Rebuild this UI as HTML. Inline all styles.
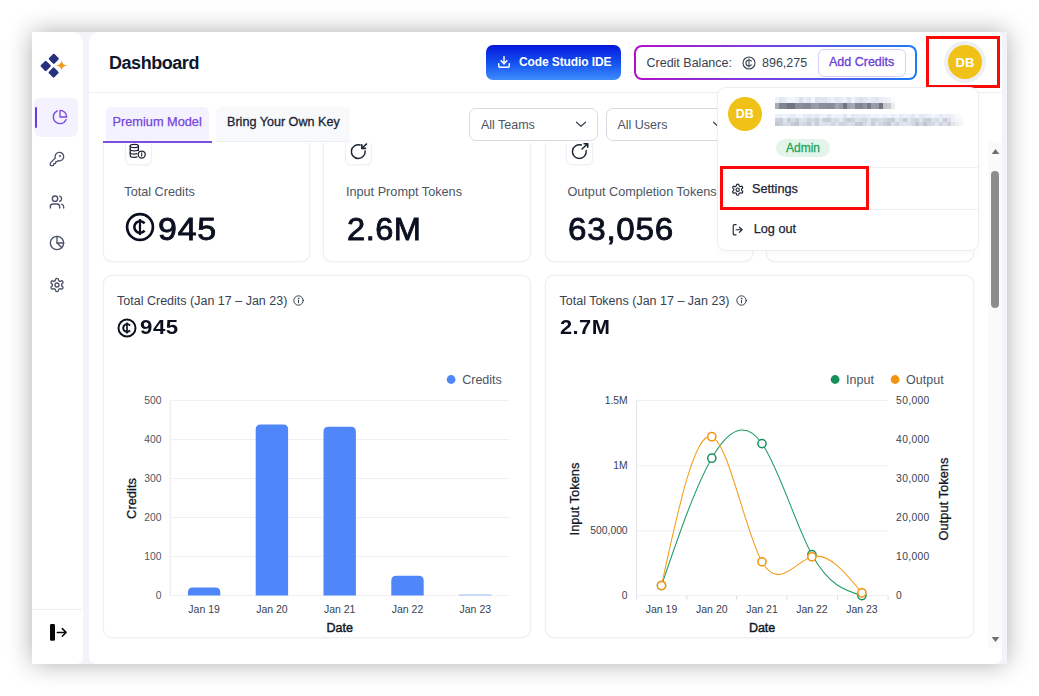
<!DOCTYPE html>
<html lang="en">
<head>
<meta charset="utf-8">
<title>Dashboard</title>
<style>
*{box-sizing:border-box;margin:0;padding:0}
html,body{width:1039px;height:696px;overflow:hidden;background:#fff}
body{font-family:"Liberation Sans",Arial,sans-serif;color:#111827;position:relative}
.abs{position:absolute}
#win{position:absolute;left:32px;top:32px;width:975px;height:632px;background:#f3f4f9;
  box-shadow:0 0 23px 0 rgba(0,0,0,.32);overflow:hidden}
/* coordinates inside #win are page coords minus 32 */
#side{position:absolute;left:0;top:0;width:50.8px;height:632px;background:#fff;border-radius:0 11px 7px 0}
#main{position:absolute;left:57px;top:0;width:913px;height:632px;background:#fff;border-radius:10px 6px 7px 7px;overflow:hidden}
#hdr{position:absolute;left:0;top:0;width:913px;height:61px;border-bottom:1px solid #eef0f4;background:#fff}
.t{position:absolute;white-space:nowrap;line-height:1}
.ic{fill:none;stroke:currentColor;stroke-width:2;stroke-linecap:round;stroke-linejoin:round;color:#4a5168}
.card{position:absolute;background:#fff;border:1px solid #eff0f5;border-radius:9px;box-shadow:0 0 0 .4px #f1f2f6}
.ibox{position:absolute;left:20px;top:19px;width:27px;height:27px;border:1px solid #eef0f4;border-radius:6px;background:#fff;box-shadow:0 1px 2px rgba(16,24,40,.04)}
.lbl{position:absolute;left:19.5px;top:66.5px;font-size:12.7px;color:#4b5563;white-space:nowrap;line-height:1}
.val{position:absolute;left:22px;top:95.2px;font-size:31px;font-weight:400;color:#0b1020;white-space:nowrap;line-height:1;letter-spacing:2.4px;-webkit-text-stroke:.85px #0b1020;transform-origin:0 50%}
.sel{position:absolute;height:32.8px;border:1px solid #d6dae3;border-radius:7px;background:#fff}
.blur{left:0;top:0;filter:blur(.7px)}
.blur i{position:absolute;display:block}
</style>
</head>
<body>
<div id="win">
  <!-- SIDEBAR -->
  <div id="side">
    <!-- logo -->
    <svg class="abs" style="left:5px;top:20px" width="34" height="28" viewBox="0 0 34 28">
      <g fill="#27307f">
        <rect x="-3.9" y="-3.9" width="7.8" height="7.8" rx="1.1" transform="translate(16.8,6.8) rotate(45)"/>
        <rect x="-3.9" y="-3.9" width="7.8" height="7.8" rx="1.1" transform="translate(8.7,13.9) rotate(45)"/>
        <rect x="-3.9" y="-3.9" width="7.8" height="7.8" rx="1.1" transform="translate(16.6,20.5) rotate(45)"/>
      </g>
      <path fill="#f59a1f" d="M24.6 8.5 C25.2 11.5 26.6 12.9 30.4 13.5 C26.6 14.1 25.2 15.5 24.6 18.5 C24 15.5 22.6 14.1 18.8 13.5 C22.6 12.9 24 11.5 24.6 8.5Z"/>
    </svg>
    <!-- active nav -->
    <div class="abs" style="left:2px;top:66px;width:44px;height:39px;background:#f5f2ff;border-radius:6px"></div>
    <div class="abs" style="left:2.5px;top:75px;width:2.5px;height:21px;background:#6a3dd6;border-radius:2px"></div>
    <svg class="abs ic" style="left:20px;top:77px;color:#7a4be0" width="16" height="16" viewBox="0 0 24 24"><path d="M21.21 15.89A10 10 0 1 1 8 2.83"/><path d="M22 12A10 10 0 0 0 12 2v10z"/></svg>
    <svg class="abs ic" style="left:17px;top:119px" width="16" height="16" viewBox="0 0 24 24"><path d="M2.586 17.414A2 2 0 0 0 2 18.828V21a1 1 0 0 0 1 1h3a1 1 0 0 0 1-1v-1a1 1 0 0 1 1-1h1a1 1 0 0 0 1-1v-1a1 1 0 0 1 1-1h.172a2 2 0 0 0 1.414-.586l.814-.814a6.5 6.5 0 1 0-4-4z"/><circle cx="16.5" cy="7.5" r=".6" fill="currentColor"/></svg>
    <svg class="abs ic" style="left:16.8px;top:161.5px" width="16" height="16" viewBox="0 0 24 24"><path d="M16 21v-2a4 4 0 0 0-4-4H6a4 4 0 0 0-4 4v2"/><circle cx="9" cy="7" r="4"/><path d="M22 21v-2a4 4 0 0 0-3-3.87"/><path d="M16 3.13a4 4 0 0 1 0 7.75"/></svg>
    <svg class="abs ic" style="left:17px;top:203px" width="16" height="16" viewBox="0 0 24 24"><circle cx="12" cy="12" r="10"/><path d="M12 2v10l7.2 6.8"/><path d="M12 12h10"/></svg>
    <svg class="abs ic" style="left:17px;top:245px" width="16" height="16" viewBox="0 0 24 24"><path d="M12.22 2h-.44a2 2 0 0 0-2 2v.18a2 2 0 0 1-1 1.73l-.43.25a2 2 0 0 1-2 0l-.15-.08a2 2 0 0 0-2.73.73l-.22.38a2 2 0 0 0 .73 2.73l.15.1a2 2 0 0 1 1 1.72v.51a2 2 0 0 1-1 1.74l-.15.09a2 2 0 0 0-.73 2.73l.22.38a2 2 0 0 0 2.73.73l.15-.08a2 2 0 0 1 2 0l.43.25a2 2 0 0 1 1 1.73V20a2 2 0 0 0 2 2h.44a2 2 0 0 0 2-2v-.18a2 2 0 0 1 1-1.73l.43-.25a2 2 0 0 1 2 0l.15.08a2 2 0 0 0 2.73-.73l.22-.39a2 2 0 0 0-.73-2.73l-.15-.08a2 2 0 0 1-1-1.74v-.5a2 2 0 0 1 1-1.74l.15-.09a2 2 0 0 0 .73-2.73l-.22-.38a2 2 0 0 0-2.73-.73l-.15.08a2 2 0 0 1-2 0l-.43-.25a2 2 0 0 1-1-1.73V4a2 2 0 0 0-2-2z"/><circle cx="12" cy="12" r="3"/></svg>
    <!-- bottom -->
    <div class="abs" style="left:0;top:577px;width:50px;height:1px;background:#eceef3"></div>
    <svg class="abs" style="left:16.7px;top:591.3px" width="20" height="19" viewBox="0 0 20 19"><rect x="1" y="1" width="5" height="16.8" rx="1.3" fill="#0a0a0a"/><path d="M8.3 9.4h8.6M13.3 5.6L17.1 9.4 13.3 13.2" fill="none" stroke="#0a0a0a" stroke-width="1.5" stroke-linecap="round" stroke-linejoin="round"/></svg>
  </div>
  <!-- MAIN -->
  <div id="main">
    <!-- stat cards (scrolled under the tab bar) -->
    <div class="card" style="left:13.8px;top:86px;width:207.4px;height:144px"><div class="abs" style="left:1px;top:0">
      <div class="ibox"><svg class="abs" style="left:-1px;top:-1px" width="27" height="27" viewBox="0 0 27 27" fill="none" stroke="#1b2333" stroke-width="1.25" stroke-linecap="round" stroke-linejoin="round"><ellipse cx="9.3" cy="7.9" rx="4.1" ry="1.6"/><path d="M5.2 7.9v9.8c0 .9 1.8 1.6 4.1 1.6 1 0 1.9-.1 2.6-.4M13.4 7.9v4.6"/><path d="M5.2 11.2c0 .9 1.8 1.6 4.1 1.6s4.1-.7 4.1-1.6M5.2 14.5c0 .9 1.8 1.6 4.1 1.6 1 0 1.9-.15 2.6-.4"/><circle cx="16.7" cy="16.5" r="3.5" fill="#fff"/><path d="M16.7 14.9v3.2" stroke-width="1.1"/></svg></div>
      <div class="lbl">Total Credits</div>
      <svg class="abs" style="left:20.5px;top:93px" width="30" height="30" viewBox="0 0 30 30" fill="none" stroke="#0b1020" stroke-linecap="round"><circle cx="15" cy="15" r="12.9" stroke-width="2.7"/><path d="M19.6 11.3A5.8 5.8 0 1 0 19.6 18.7" stroke-width="2.6" stroke-linecap="butt"/><path d="M15 6.9v16.2" stroke-width="2.2" stroke-linecap="butt"/></svg>
      <div class="val" style="left:52.8px;letter-spacing:.7px;transform:scaleX(1.095)">945</div>
    </div></div>
    <div class="card" style="left:233.9px;top:86px;width:208.5px;height:144px"><div class="abs" style="left:.5px;top:0">
      <div class="ibox" style="left:20.5px"><svg class="abs" style="left:-1px;top:-1px" width="27" height="27" viewBox="0 0 27 27" fill="none" stroke="#1b2333" stroke-width="1.45" stroke-linecap="round" stroke-linejoin="round"><path d="M15.1 6.950A6.9 6.9 0 1 0 20.150 13"/><path d="M21.6 5.9L16.9 10.3"/><path d="M16.8 6.7v3.7h3.7" stroke-width="1.6"/></svg></div>
      <div class="lbl" style="left:21.5px">Input Prompt Tokens</div>
      <div class="val" style="left:22.3px;letter-spacing:.5px;transform:scaleX(1.05)">2.6M</div>
    </div></div>
    <div class="card" style="left:456.3px;top:86px;width:207.7px;height:144px"><div class="abs" style="left:-.4px;top:0">
      <div class="ibox" style="left:20.5px"><svg class="abs" style="left:-1px;top:-1px" width="27" height="27" viewBox="0 0 27 27" fill="none" stroke="#1b2333" stroke-width="1.45" stroke-linecap="round" stroke-linejoin="round"><path d="M15.3 7A6.9 6.9 0 1 0 20.150 12.6"/><path d="M16 11L21.5 5.9"/><path d="M18.1 5.7h3.6v3.6" stroke-width="1.6"/></svg></div>
      <div class="lbl" style="left:21.5px">Output Completion Tokens</div>
      <div class="val" style="left:21.8px;letter-spacing:.7px;transform:scaleX(1.07)">63,056</div>
    </div></div>
    <div class="card" style="left:676.9px;top:86px;width:208.5px;height:144px"></div>

    <!-- chart cards -->
    <div class="card" style="left:13.8px;top:242.9px;width:428.6px;height:363px"><div class="abs" style="left:1px;top:.9px">
      <svg class="abs" style="left:0;top:0" width="426" height="359" viewBox="0 0 426 359" font-family="Liberation Sans, Arial, sans-serif">
      <line x1="65.2" x2="404.7" y1="123.6" y2="123.6" stroke="#efeff1" stroke-width="1"/>
      <line x1="65.2" x2="404.7" y1="162.5" y2="162.5" stroke="#efeff1" stroke-width="1"/>
      <line x1="65.2" x2="404.7" y1="201.5" y2="201.5" stroke="#efeff1" stroke-width="1"/>
      <line x1="65.2" x2="404.7" y1="240.4" y2="240.4" stroke="#efeff1" stroke-width="1"/>
      <line x1="65.2" x2="404.7" y1="279.4" y2="279.4" stroke="#efeff1" stroke-width="1"/>
      <line x1="65.2" x2="404.7" y1="318.4" y2="318.4" stroke="#efeff1" stroke-width="1"/>
      <line x1="65.2" x2="65.2" y1="123.6" y2="318.4" stroke="#e6e6e9" stroke-width="1"/>
      <text x="56.4" y="126.8" text-anchor="end" font-size="10.3" fill="#4b5563">500</text>
      <text x="56.4" y="165.7" text-anchor="end" font-size="10.3" fill="#4b5563">400</text>
      <text x="56.4" y="204.7" text-anchor="end" font-size="10.3" fill="#4b5563">300</text>
      <text x="56.4" y="243.6" text-anchor="end" font-size="10.3" fill="#4b5563">200</text>
      <text x="56.4" y="282.6" text-anchor="end" font-size="10.3" fill="#4b5563">100</text>
      <text x="56.4" y="321.6" text-anchor="end" font-size="10.3" fill="#4b5563">0</text>
      <path fill="#4f87fa" d="M82.9 318.4V315.5Q82.9 310.6 87.8 310.6H110.4Q115.3 310.6 115.3 315.5V318.4Z"/>
      <path fill="#4f87fa" d="M150.7 318.4V152.4Q150.7 147.4 155.7 147.4H178.1Q183.1 147.4 183.1 152.4V318.4Z"/>
      <path fill="#4f87fa" d="M218.5 318.4V154.8Q218.5 149.8 223.5 149.8H245.9Q250.9 149.8 250.9 154.8V318.4Z"/>
      <path fill="#4f87fa" d="M286.3 318.4V303.8Q286.3 298.8 291.3 298.8H313.7Q318.7 298.8 318.7 303.8V318.4Z"/>
      <rect x="354.1" y="317.4" width="32.4" height="1.2" fill="#a9c5fc"/>
      <text x="99.1" y="336.0" text-anchor="middle" font-size="10.5" fill="#374151">Jan 19</text>
      <text x="166.9" y="336.0" text-anchor="middle" font-size="10.5" fill="#374151">Jan 20</text>
      <text x="234.7" y="336.0" text-anchor="middle" font-size="10.5" fill="#374151">Jan 21</text>
      <text x="302.5" y="336.0" text-anchor="middle" font-size="10.5" fill="#374151">Jan 22</text>
      <text x="370.3" y="336.0" text-anchor="middle" font-size="10.5" fill="#374151">Jan 23</text>
      <text x="234.7" y="354.5" text-anchor="middle" font-size="12.5" fill="#111827" stroke="#111827" stroke-width=".45">Date</text>
      <text transform="translate(30.5,221.5) rotate(-90)" text-anchor="middle" font-size="12.9" fill="#111827" stroke="#111827" stroke-width=".3">Credits</text>
      <circle cx="346.1" cy="102.5" r="4.4" fill="#4f87fa"/>
      <text x="357.2" y="106.8" font-size="12.5" fill="#4b5563">Credits</text>
      </svg>
      <div class="t" style="left:12.3px;top:18.6px;font-size:12.5px;color:#374151">Total Credits (Jan 17 – Jan 23)</div>
      <svg class="abs" style="left:188.5px;top:18.3px" width="11" height="11" viewBox="0 0 11 11" fill="none" stroke="#374151" stroke-width="1" stroke-linecap="round"><circle cx="5.5" cy="5.5" r="4.7"/><path d="M5.5 5.2v2.6"/><circle cx="5.5" cy="3.4" r=".35" fill="#374151"/></svg>
      <svg class="abs" style="left:12.6px;top:41.1px" width="20" height="20" viewBox="0 0 30 30" fill="none" stroke="#0b1020" stroke-linecap="round"><circle cx="15" cy="15" r="12.8" stroke-width="2.9"/><path d="M19.6 11.3A5.8 5.8 0 1 0 19.6 18.7" stroke-width="2.9" stroke-linecap="butt"/><path d="M15 6.7v16.6" stroke-width="2.5" stroke-linecap="butt"/></svg>
      <div class="t" style="left:35.5px;top:41.5px;font-size:19.5px;font-weight:700;color:#0b1020;letter-spacing:.5px;transform:scaleX(1.14);transform-origin:0 50%">945</div>
    </div></div>
    <div class="card" style="left:456.3px;top:242.9px;width:429.1px;height:363px"><div class="abs" style="left:-.4px;top:.9px">
      <svg class="abs" style="left:0;top:0" width="427" height="359" viewBox="0 0 427 359" font-family="Liberation Sans, Arial, sans-serif">
      <line x1="90.5" x2="342.1" y1="123.6" y2="123.6" stroke="#efeff1" stroke-width="1"/>
      <line x1="90.5" x2="342.1" y1="188.8" y2="188.8" stroke="#efeff1" stroke-width="1"/>
      <line x1="90.5" x2="342.1" y1="253.8" y2="253.8" stroke="#efeff1" stroke-width="1"/>
      <line x1="90.5" x2="342.1" y1="318.6" y2="318.6" stroke="#efeff1" stroke-width="1"/>
      <line x1="90.5" x2="90.5" y1="123.6" y2="322.6" stroke="#e4e4e8" stroke-width="1"/>
      <line x1="140.8" x2="140.8" y1="318.6" y2="322.6" stroke="#d5d9e0" stroke-width="1"/>
      <line x1="190.7" x2="190.7" y1="318.6" y2="322.6" stroke="#d5d9e0" stroke-width="1"/>
      <line x1="241.0" x2="241.0" y1="318.6" y2="322.6" stroke="#d5d9e0" stroke-width="1"/>
      <line x1="291.5" x2="291.5" y1="318.6" y2="322.6" stroke="#d5d9e0" stroke-width="1"/>
      <line x1="342.1" x2="342.1" y1="318.6" y2="322.6" stroke="#d5d9e0" stroke-width="1"/>
      <text x="81.6" y="126.8" text-anchor="end" font-size="10.3" fill="#374151">1.5M</text>
      <text x="81.6" y="192.0" text-anchor="end" font-size="10.3" fill="#374151">1M</text>
      <text x="81.6" y="257.0" text-anchor="end" font-size="10.3" fill="#374151">500,000</text>
      <text x="81.6" y="321.8" text-anchor="end" font-size="10.3" fill="#374151">0</text>
      <text x="350.1" y="126.8" font-size="10.3" fill="#374151" letter-spacing=".35">50,000</text>
      <text x="350.1" y="165.7" font-size="10.3" fill="#374151" letter-spacing=".35">40,000</text>
      <text x="350.1" y="204.7" font-size="10.3" fill="#374151" letter-spacing=".35">30,000</text>
      <text x="350.1" y="243.6" font-size="10.3" fill="#374151" letter-spacing=".35">20,000</text>
      <text x="350.1" y="282.6" font-size="10.3" fill="#374151" letter-spacing=".35">10,000</text>
      <text x="350.1" y="321.8" font-size="10.3" fill="#374151" letter-spacing=".35">0</text>
      <path d="M115.5 308.5C132.3 259.4 149.0 210.4 165.8 181.2C182.5 152.1 199.3 142.7 216.0 166.6C232.6 190.3 249.3 246.8 265.9 277.6C282.6 308.5 299.2 313.5 315.9 318.6" fill="none" stroke="#1f9d64" stroke-width="1.05"/>
      <path d="M115.5 308.5C132.3 231.0 149.0 153.6 165.8 159.7C182.5 165.8 199.3 255.2 216.0 284.8C232.6 314.2 249.3 284.5 265.9 279.8C282.6 275.1 299.2 295.4 315.9 315.8" fill="none" stroke="#f59b1c" stroke-width="1.05"/>
      <circle cx="115.5" cy="308.5" r="4.1" fill="#fff" stroke="#14925a" stroke-width="1.5"/>
      <circle cx="165.8" cy="181.2" r="4.1" fill="#fff" stroke="#14925a" stroke-width="1.5"/>
      <circle cx="216.0" cy="166.6" r="4.1" fill="#fff" stroke="#14925a" stroke-width="1.5"/>
      <circle cx="265.9" cy="277.6" r="4.1" fill="#fff" stroke="#14925a" stroke-width="1.5"/>
      <circle cx="315.9" cy="318.6" r="4.1" fill="#fff" stroke="#14925a" stroke-width="1.5"/>
      <circle cx="115.5" cy="308.5" r="4.1" fill="#fff" stroke="#f3920f" stroke-width="1.5"/>
      <circle cx="165.8" cy="159.7" r="4.1" fill="#fff" stroke="#f3920f" stroke-width="1.5"/>
      <circle cx="216.0" cy="284.8" r="4.1" fill="#fff" stroke="#f3920f" stroke-width="1.5"/>
      <circle cx="265.9" cy="279.8" r="4.1" fill="#fff" stroke="#f3920f" stroke-width="1.5"/>
      <circle cx="315.9" cy="315.8" r="4.1" fill="#fff" stroke="#f3920f" stroke-width="1.5"/>
      <text x="115.5" y="336.0" text-anchor="middle" font-size="10.5" fill="#374151">Jan 19</text>
      <text x="165.8" y="336.0" text-anchor="middle" font-size="10.5" fill="#374151">Jan 20</text>
      <text x="216.0" y="336.0" text-anchor="middle" font-size="10.5" fill="#374151">Jan 21</text>
      <text x="265.9" y="336.0" text-anchor="middle" font-size="10.5" fill="#374151">Jan 22</text>
      <text x="315.9" y="336.0" text-anchor="middle" font-size="10.5" fill="#374151">Jan 23</text>
      <text x="216.1" y="354.5" text-anchor="middle" font-size="12.5" fill="#111827" stroke="#111827" stroke-width=".45">Date</text>
      <text transform="translate(32.9,222.0) rotate(-90)" text-anchor="middle" font-size="12.9" fill="#111827" stroke="#111827" stroke-width=".3">Input Tokens</text>
      <text transform="translate(402.4,222.0) rotate(-90)" text-anchor="middle" font-size="12.9" fill="#111827" stroke="#111827" stroke-width=".3">Output Tokens</text>
      <circle cx="289.1" cy="102.5" r="4.4" fill="#14925a"/>
      <text x="300.1" y="106.8" font-size="12.5" fill="#4b5563">Input</text>
      <circle cx="349.1" cy="102.5" r="4.4" fill="#f3920f"/>
      <text x="360.1" y="106.8" font-size="12.5" fill="#4b5563">Output</text>
      </svg>
      <div class="t" style="left:13.6px;top:18.6px;font-size:12.5px;color:#374151">Total Tokens (Jan 17 – Jan 23)</div>
      <svg class="abs" style="left:190.5px;top:18.3px" width="11" height="11" viewBox="0 0 11 11" fill="none" stroke="#374151" stroke-width="1" stroke-linecap="round"><circle cx="5.5" cy="5.5" r="4.7"/><path d="M5.5 5.2v2.6"/><circle cx="5.5" cy="3.4" r=".35" fill="#374151"/></svg>
      <div class="t" style="left:14px;top:41.5px;font-size:19.5px;font-weight:700;color:#0b1020;letter-spacing:.4px;transform:scaleX(1.12);transform-origin:0 50%">2.7M</div>
    </div></div>

    <!-- sticky tab / filter bar -->
    <div class="abs" style="left:0;top:62px;width:899px;height:48.5px;background:#fff"></div>
    <div class="abs" style="left:16.5px;top:75px;width:103.5px;height:33.5px;background:#f5f2ff;border-radius:5px 5px 0 0"></div>
    <div class="abs" style="left:14px;top:108.7px;width:109px;height:2px;background:#7a4fe0"></div>
    <div class="t" style="left:23.5px;top:84px;font-size:12.75px;color:#7345dc;-webkit-text-stroke:.25px #7345dc">Premium Model</div>
    <div class="abs" style="left:127.4px;top:75px;width:134px;height:34.5px;background:#f8f9fb;border-radius:5px 5px 0 0;border-bottom:1.5px solid #eceef2"></div>
    <div class="t" style="left:138px;top:84px;font-size:12.6px;color:#1b2333;-webkit-text-stroke:.3px #1b2333">Bring Your Own Key</div>
    <div class="sel" style="left:380.2px;top:76px;width:128.4px">
      <div class="t" style="left:10.7px;top:9.8px;font-size:12.5px;color:#4b5563">All Teams</div>
      <svg class="abs" style="left:105px;top:9.4px" width="12" height="12" viewBox="0 0 12 12" fill="none" stroke="#374151" stroke-width="1.15" stroke-linecap="round" stroke-linejoin="round"><path d="M1.5 4.2L6 8.3l4.5-4.1"/></svg>
    </div>
    <div class="sel" style="left:516.9px;top:76px;width:128.4px">
      <div class="t" style="left:10.5px;top:9.8px;font-size:12.5px;color:#4b5563">All Users</div>
      <svg class="abs" style="left:105px;top:9.4px" width="12" height="12" viewBox="0 0 12 12" fill="none" stroke="#374151" stroke-width="1.15" stroke-linecap="round" stroke-linejoin="round"><path d="M1.5 4.2L6 8.3l4.5-4.1"/></svg>
    </div>
    <div id="hdr">
      <div class="t" style="left:20px;top:22px;font-size:18px;font-weight:700;letter-spacing:-.45px;color:#0f172a">Dashboard</div>
      <!-- Code Studio IDE -->
      <div class="abs" style="left:397.3px;top:13.3px;width:134.4px;height:34.4px;border-radius:7px;background:linear-gradient(180deg,#0616dc 0%,#1450ef 50%,#3d8dfd 100%)">
        <svg class="abs" style="left:10.7px;top:9.7px;color:#fff" width="14" height="14" viewBox="0 0 24 24" fill="none" stroke="currentColor" stroke-width="2.6" stroke-linecap="round" stroke-linejoin="round"><path d="M21 15v4a2 2 0 0 1-2 2H5a2 2 0 0 1-2-2v-4"/><path d="M7 10l5 5 5-5"/><path d="M12 15V3"/></svg>
        <div class="t" style="left:32.7px;top:10.7px;font-size:12px;font-weight:700;letter-spacing:-.1px;color:#fff">Code Studio IDE</div>
      </div>
      <!-- Credit balance -->
      <div class="abs" style="left:545px;top:13px;width:283px;height:35px;border-radius:8px;background:linear-gradient(90deg,#b012c8 0%,#7a3fe0 45%,#1b7df5 100%)">
        <div class="abs" style="left:2px;top:2px;right:2px;bottom:2px;background:#fff;border-radius:6px"></div>
        <div class="t" style="left:12.5px;top:11.5px;font-size:12.5px;color:#374151">Credit Balance:</div>
        <svg class="abs" style="left:108px;top:10.5px" width="14" height="14" viewBox="0 0 14 14" fill="none" stroke="#374151" stroke-width="1.1" stroke-linecap="round"><circle cx="7" cy="7" r="6"/><path d="M9.3 5.1A3 3 0 1 0 9.3 8.9" stroke-width="1.2"/><path d="M7 2.9v8.2" stroke-width="1"/></svg>
        <div class="t" style="left:128px;top:11.5px;font-size:12.5px;color:#374151">896,275</div>
        <div class="abs" style="left:184px;top:4px;width:88px;height:27.5px;border:1px solid #d9cdf6;border-radius:6px;background:#fff"></div>
        <div class="t" style="left:195px;top:11px;font-size:12.5px;font-weight:400;color:#6a3dd6;-webkit-text-stroke:.3px #6a3dd6">Add Credits</div>
      </div>
      <!-- avatar -->
      <div class="abs" style="left:855px;top:9px;width:42px;height:42px;border-radius:50%;background:#eef0f3"></div>
      <div class="abs" style="left:859px;top:13px;width:34px;height:34px;border-radius:50%;background:#f0c117"></div>
      <div class="t" style="left:859px;top:23.5px;width:34px;text-align:center;font-size:13px;font-weight:700;color:#fff">DB</div>
      <div class="abs" style="left:837px;top:4.2px;width:73.5px;height:51.6px;border:3px solid #fb0808"></div>
    </div>
    <!-- scrollbar -->
    <div class="abs" style="left:899px;top:110px;width:14px;height:506px;background:#fafafa"></div>
    <svg class="abs" style="left:902px;top:115.5px" width="9" height="7" viewBox="0 0 9 7"><path d="M4.5.9L8.3 6H.7z" fill="#6f6f6f"/></svg>
    <div class="abs" style="left:902.2px;top:138.6px;width:8.3px;height:137.7px;border-radius:4.2px;background:#8c8c8c"></div>
    <svg class="abs" style="left:902px;top:603.5px" width="9" height="7" viewBox="0 0 9 7"><path d="M4.5 6.1L8.3 1H.7z" fill="#6f6f6f"/></svg>

    <!-- user dropdown -->
    <div class="abs" id="dd" style="left:627.8px;top:54.8px;width:262.6px;height:164.4px;background:#fff;border:1px solid #eceef2;border-radius:9px;box-shadow:0 2px 5px rgba(16,24,40,.03)"></div>
    <div class="abs" style="left:638.6px;top:64.8px;width:34.4px;height:34.4px;border-radius:50%;background:#f0c117"></div>
    <div class="t" style="left:638.6px;top:75.8px;width:34.4px;text-align:center;font-size:12.5px;font-weight:700;color:#fff">DB</div>
    <div class="abs blur"><i style="left:685.5px;top:65.2px;width:4.3px;height:5.9px;background:rgba(239,243,253,1.0)"></i><i style="left:689.5px;top:65.2px;width:4.3px;height:5.9px;background:rgba(228,232,242,1.0)"></i><i style="left:693.5px;top:65.2px;width:4.3px;height:5.9px;background:rgba(231,235,245,1.0)"></i><i style="left:697.5px;top:65.2px;width:4.3px;height:5.9px;background:rgba(242,246,256,1.0)"></i><i style="left:701.5px;top:65.2px;width:4.3px;height:5.9px;background:rgba(240,244,254,1.0)"></i><i style="left:705.5px;top:65.2px;width:4.3px;height:5.9px;background:rgba(236,240,250,1.0)"></i><i style="left:709.5px;top:65.2px;width:4.3px;height:5.9px;background:rgba(220,224,234,1.0)"></i><i style="left:713.5px;top:65.2px;width:4.3px;height:5.9px;background:rgba(234,238,248,1.0)"></i><i style="left:717.5px;top:65.2px;width:4.3px;height:5.9px;background:rgba(227,231,241,1.0)"></i><i style="left:721.5px;top:65.2px;width:4.3px;height:5.9px;background:rgba(240,244,254,1.0)"></i><i style="left:725.5px;top:65.2px;width:4.3px;height:5.9px;background:rgba(221,225,235,1.0)"></i><i style="left:729.5px;top:65.2px;width:4.3px;height:5.9px;background:rgba(225,229,239,1.0)"></i><i style="left:733.5px;top:65.2px;width:4.3px;height:5.9px;background:rgba(223,227,237,1.0)"></i><i style="left:737.5px;top:65.2px;width:4.3px;height:5.9px;background:rgba(231,235,245,1.0)"></i><i style="left:741.5px;top:65.2px;width:4.3px;height:5.9px;background:rgba(235,239,249,1.0)"></i><i style="left:745.5px;top:65.2px;width:4.3px;height:5.9px;background:rgba(227,231,241,1.0)"></i><i style="left:749.5px;top:65.2px;width:4.3px;height:5.9px;background:rgba(232,236,246,1.0)"></i><i style="left:753.5px;top:65.2px;width:4.3px;height:5.9px;background:rgba(237,241,251,1.0)"></i><i style="left:757.5px;top:65.2px;width:4.3px;height:5.9px;background:rgba(223,227,237,1.0)"></i><i style="left:761.5px;top:65.2px;width:4.3px;height:5.9px;background:rgba(238,242,252,1.0)"></i><i style="left:765.5px;top:65.2px;width:4.3px;height:5.9px;background:rgba(227,231,241,1.0)"></i><i style="left:769.5px;top:65.2px;width:4.3px;height:5.9px;background:rgba(220,224,234,1.0)"></i><i style="left:773.5px;top:65.2px;width:4.3px;height:5.9px;background:rgba(226,230,240,1.0)"></i><i style="left:777.5px;top:65.2px;width:4.3px;height:5.9px;background:rgba(233,237,247,1.0)"></i><i style="left:781.5px;top:65.2px;width:4.3px;height:5.9px;background:rgba(228,232,242,1.0)"></i><i style="left:785.5px;top:65.2px;width:4.3px;height:5.9px;background:rgba(225,229,239,1.0)"></i><i style="left:789.5px;top:65.2px;width:4.3px;height:5.9px;background:rgba(232,236,246,1.0)"></i><i style="left:793.5px;top:65.2px;width:4.3px;height:5.9px;background:rgba(225,229,239,0.6)"></i><i style="left:797.5px;top:65.2px;width:4.3px;height:5.9px;background:rgba(222,226,236,0.4)"></i><i style="left:801.5px;top:65.2px;width:4.3px;height:5.9px;background:rgba(224,228,238,0.2)"></i><i style="left:685.5px;top:70.8px;width:4.3px;height:6.7px;background:rgba(168,172,182,1.0)"></i><i style="left:689.5px;top:70.8px;width:4.3px;height:6.7px;background:rgba(128,132,142,1.0)"></i><i style="left:693.5px;top:70.8px;width:4.3px;height:6.7px;background:rgba(128,132,142,1.0)"></i><i style="left:697.5px;top:70.8px;width:4.3px;height:6.7px;background:rgba(112,116,126,1.0)"></i><i style="left:701.5px;top:70.8px;width:4.3px;height:6.7px;background:rgba(112,116,126,1.0)"></i><i style="left:705.5px;top:70.8px;width:4.3px;height:6.7px;background:rgba(138,142,152,1.0)"></i><i style="left:709.5px;top:70.8px;width:4.3px;height:6.7px;background:rgba(139,143,153,1.0)"></i><i style="left:713.5px;top:70.8px;width:4.3px;height:6.7px;background:rgba(133,137,147,1.0)"></i><i style="left:717.5px;top:70.8px;width:4.3px;height:6.7px;background:rgba(133,137,147,1.0)"></i><i style="left:721.5px;top:70.8px;width:4.3px;height:6.7px;background:rgba(149,153,163,1.0)"></i><i style="left:725.5px;top:70.8px;width:4.3px;height:6.7px;background:rgba(152,156,166,1.0)"></i><i style="left:729.5px;top:70.8px;width:4.3px;height:6.7px;background:rgba(137,141,151,1.0)"></i><i style="left:733.5px;top:70.8px;width:4.3px;height:6.7px;background:rgba(138,142,152,1.0)"></i><i style="left:737.5px;top:70.8px;width:4.3px;height:6.7px;background:rgba(135,139,149,1.0)"></i><i style="left:741.5px;top:70.8px;width:4.3px;height:6.7px;background:rgba(137,141,151,1.0)"></i><i style="left:745.5px;top:70.8px;width:4.3px;height:6.7px;background:rgba(161,165,175,1.0)"></i><i style="left:749.5px;top:70.8px;width:4.3px;height:6.7px;background:rgba(150,154,164,1.0)"></i><i style="left:753.5px;top:70.8px;width:4.3px;height:6.7px;background:rgba(114,118,128,1.0)"></i><i style="left:757.5px;top:70.8px;width:4.3px;height:6.7px;background:rgba(158,162,172,1.0)"></i><i style="left:761.5px;top:70.8px;width:4.3px;height:6.7px;background:rgba(165,169,179,1.0)"></i><i style="left:765.5px;top:70.8px;width:4.3px;height:6.7px;background:rgba(133,137,147,1.0)"></i><i style="left:769.5px;top:70.8px;width:4.3px;height:6.7px;background:rgba(130,134,144,1.0)"></i><i style="left:773.5px;top:70.8px;width:4.3px;height:6.7px;background:rgba(145,149,159,1.0)"></i><i style="left:777.5px;top:70.8px;width:4.3px;height:6.7px;background:rgba(120,124,134,1.0)"></i><i style="left:781.5px;top:70.8px;width:4.3px;height:6.7px;background:rgba(154,158,168,1.0)"></i><i style="left:785.5px;top:70.8px;width:4.3px;height:6.7px;background:rgba(150,154,164,1.0)"></i><i style="left:789.5px;top:70.8px;width:4.3px;height:6.7px;background:rgba(112,116,126,1.0)"></i><i style="left:793.5px;top:70.8px;width:4.3px;height:6.7px;background:rgba(155,159,169,0.6)"></i><i style="left:797.5px;top:70.8px;width:4.3px;height:6.7px;background:rgba(120,124,134,0.4)"></i><i style="left:801.5px;top:70.8px;width:4.3px;height:6.7px;background:rgba(151,155,165,0.2)"></i><i style="left:685.5px;top:81.5px;width:4.3px;height:4.5px;background:rgba(237,241,251,1.0)"></i><i style="left:689.5px;top:81.5px;width:4.3px;height:4.5px;background:rgba(235,239,249,1.0)"></i><i style="left:693.5px;top:81.5px;width:4.3px;height:4.5px;background:rgba(241,245,255,1.0)"></i><i style="left:697.5px;top:81.5px;width:4.3px;height:4.5px;background:rgba(236,240,250,1.0)"></i><i style="left:701.5px;top:81.5px;width:4.3px;height:4.5px;background:rgba(231,235,245,1.0)"></i><i style="left:705.5px;top:81.5px;width:4.3px;height:4.5px;background:rgba(241,245,255,1.0)"></i><i style="left:709.5px;top:81.5px;width:4.3px;height:4.5px;background:rgba(241,245,255,1.0)"></i><i style="left:713.5px;top:81.5px;width:4.3px;height:4.5px;background:rgba(231,235,245,1.0)"></i><i style="left:717.5px;top:81.5px;width:4.3px;height:4.5px;background:rgba(227,231,241,1.0)"></i><i style="left:721.5px;top:81.5px;width:4.3px;height:4.5px;background:rgba(234,238,248,1.0)"></i><i style="left:725.5px;top:81.5px;width:4.3px;height:4.5px;background:rgba(226,230,240,1.0)"></i><i style="left:729.5px;top:81.5px;width:4.3px;height:4.5px;background:rgba(237,241,251,1.0)"></i><i style="left:733.5px;top:81.5px;width:4.3px;height:4.5px;background:rgba(238,242,252,1.0)"></i><i style="left:737.5px;top:81.5px;width:4.3px;height:4.5px;background:rgba(226,230,240,1.0)"></i><i style="left:741.5px;top:81.5px;width:4.3px;height:4.5px;background:rgba(239,243,253,1.0)"></i><i style="left:745.5px;top:81.5px;width:4.3px;height:4.5px;background:rgba(237,241,251,1.0)"></i><i style="left:749.5px;top:81.5px;width:4.3px;height:4.5px;background:rgba(238,242,252,1.0)"></i><i style="left:753.5px;top:81.5px;width:4.3px;height:4.5px;background:rgba(226,230,240,1.0)"></i><i style="left:757.5px;top:81.5px;width:4.3px;height:4.5px;background:rgba(240,244,254,1.0)"></i><i style="left:761.5px;top:81.5px;width:4.3px;height:4.5px;background:rgba(227,231,241,1.0)"></i><i style="left:765.5px;top:81.5px;width:4.3px;height:4.5px;background:rgba(231,235,245,1.0)"></i><i style="left:769.5px;top:81.5px;width:4.3px;height:4.5px;background:rgba(232,236,246,1.0)"></i><i style="left:773.5px;top:81.5px;width:4.3px;height:4.5px;background:rgba(229,233,243,1.0)"></i><i style="left:777.5px;top:81.5px;width:4.3px;height:4.5px;background:rgba(233,237,247,1.0)"></i><i style="left:781.5px;top:81.5px;width:4.3px;height:4.5px;background:rgba(240,244,254,1.0)"></i><i style="left:785.5px;top:81.5px;width:4.3px;height:4.5px;background:rgba(237,241,251,1.0)"></i><i style="left:789.5px;top:81.5px;width:4.3px;height:4.5px;background:rgba(242,246,256,1.0)"></i><i style="left:793.5px;top:81.5px;width:4.3px;height:4.5px;background:rgba(237,241,251,1.0)"></i><i style="left:797.5px;top:81.5px;width:4.3px;height:4.5px;background:rgba(242,246,256,1.0)"></i><i style="left:801.5px;top:81.5px;width:4.3px;height:4.5px;background:rgba(234,238,248,1.0)"></i><i style="left:805.5px;top:81.5px;width:4.3px;height:4.5px;background:rgba(240,244,254,1.0)"></i><i style="left:809.5px;top:81.5px;width:4.3px;height:4.5px;background:rgba(229,233,243,1.0)"></i><i style="left:813.5px;top:81.5px;width:4.3px;height:4.5px;background:rgba(237,241,251,1.0)"></i><i style="left:817.5px;top:81.5px;width:4.3px;height:4.5px;background:rgba(235,239,249,1.0)"></i><i style="left:821.5px;top:81.5px;width:4.3px;height:4.5px;background:rgba(227,231,241,1.0)"></i><i style="left:825.5px;top:81.5px;width:4.3px;height:4.5px;background:rgba(239,243,253,1.0)"></i><i style="left:829.5px;top:81.5px;width:4.3px;height:4.5px;background:rgba(228,232,242,1.0)"></i><i style="left:833.5px;top:81.5px;width:4.3px;height:4.5px;background:rgba(232,236,246,1.0)"></i><i style="left:837.5px;top:81.5px;width:4.3px;height:4.5px;background:rgba(236,240,250,1.0)"></i><i style="left:841.5px;top:81.5px;width:4.3px;height:4.5px;background:rgba(242,246,256,1.0)"></i><i style="left:845.5px;top:81.5px;width:4.3px;height:4.5px;background:rgba(237,241,251,1.0)"></i><i style="left:849.5px;top:81.5px;width:4.3px;height:4.5px;background:rgba(230,234,244,1.0)"></i><i style="left:853.5px;top:81.5px;width:4.3px;height:4.5px;background:rgba(236,240,250,1.0)"></i><i style="left:857.5px;top:81.5px;width:4.3px;height:4.5px;background:rgba(234,238,248,1.0)"></i><i style="left:861.5px;top:81.5px;width:4.3px;height:4.5px;background:rgba(228,232,242,0.6)"></i><i style="left:865.5px;top:81.5px;width:4.3px;height:4.5px;background:rgba(235,239,249,0.4)"></i><i style="left:869.5px;top:81.5px;width:4.3px;height:4.5px;background:rgba(236,240,250,0.2)"></i><i style="left:685.5px;top:85.7px;width:4.3px;height:4.5px;background:rgba(207,211,221,1.0)"></i><i style="left:689.5px;top:85.7px;width:4.3px;height:4.5px;background:rgba(203,207,217,1.0)"></i><i style="left:693.5px;top:85.7px;width:4.3px;height:4.5px;background:rgba(223,227,237,1.0)"></i><i style="left:697.5px;top:85.7px;width:4.3px;height:4.5px;background:rgba(200,204,214,1.0)"></i><i style="left:701.5px;top:85.7px;width:4.3px;height:4.5px;background:rgba(218,222,232,1.0)"></i><i style="left:705.5px;top:85.7px;width:4.3px;height:4.5px;background:rgba(202,206,216,1.0)"></i><i style="left:709.5px;top:85.7px;width:4.3px;height:4.5px;background:rgba(221,225,235,1.0)"></i><i style="left:713.5px;top:85.7px;width:4.3px;height:4.5px;background:rgba(220,224,234,1.0)"></i><i style="left:717.5px;top:85.7px;width:4.3px;height:4.5px;background:rgba(207,211,221,1.0)"></i><i style="left:721.5px;top:85.7px;width:4.3px;height:4.5px;background:rgba(213,217,227,1.0)"></i><i style="left:725.5px;top:85.7px;width:4.3px;height:4.5px;background:rgba(203,207,217,1.0)"></i><i style="left:729.5px;top:85.7px;width:4.3px;height:4.5px;background:rgba(221,225,235,1.0)"></i><i style="left:733.5px;top:85.7px;width:4.3px;height:4.5px;background:rgba(199,203,213,1.0)"></i><i style="left:737.5px;top:85.7px;width:4.3px;height:4.5px;background:rgba(200,204,214,1.0)"></i><i style="left:741.5px;top:85.7px;width:4.3px;height:4.5px;background:rgba(217,221,231,1.0)"></i><i style="left:745.5px;top:85.7px;width:4.3px;height:4.5px;background:rgba(215,219,229,1.0)"></i><i style="left:749.5px;top:85.7px;width:4.3px;height:4.5px;background:rgba(227,231,241,1.0)"></i><i style="left:753.5px;top:85.7px;width:4.3px;height:4.5px;background:rgba(210,214,224,1.0)"></i><i style="left:757.5px;top:85.7px;width:4.3px;height:4.5px;background:rgba(199,203,213,1.0)"></i><i style="left:761.5px;top:85.7px;width:4.3px;height:4.5px;background:rgba(205,209,219,1.0)"></i><i style="left:765.5px;top:85.7px;width:4.3px;height:4.5px;background:rgba(221,225,235,1.0)"></i><i style="left:769.5px;top:85.7px;width:4.3px;height:4.5px;background:rgba(217,221,231,1.0)"></i><i style="left:773.5px;top:85.7px;width:4.3px;height:4.5px;background:rgba(209,213,223,1.0)"></i><i style="left:777.5px;top:85.7px;width:4.3px;height:4.5px;background:rgba(224,228,238,1.0)"></i><i style="left:781.5px;top:85.7px;width:4.3px;height:4.5px;background:rgba(206,210,220,1.0)"></i><i style="left:785.5px;top:85.7px;width:4.3px;height:4.5px;background:rgba(212,216,226,1.0)"></i><i style="left:789.5px;top:85.7px;width:4.3px;height:4.5px;background:rgba(218,222,232,1.0)"></i><i style="left:793.5px;top:85.7px;width:4.3px;height:4.5px;background:rgba(211,215,225,1.0)"></i><i style="left:797.5px;top:85.7px;width:4.3px;height:4.5px;background:rgba(202,206,216,1.0)"></i><i style="left:801.5px;top:85.7px;width:4.3px;height:4.5px;background:rgba(199,203,213,1.0)"></i><i style="left:805.5px;top:85.7px;width:4.3px;height:4.5px;background:rgba(227,231,241,1.0)"></i><i style="left:809.5px;top:85.7px;width:4.3px;height:4.5px;background:rgba(218,222,232,1.0)"></i><i style="left:813.5px;top:85.7px;width:4.3px;height:4.5px;background:rgba(199,203,213,1.0)"></i><i style="left:817.5px;top:85.7px;width:4.3px;height:4.5px;background:rgba(223,227,237,1.0)"></i><i style="left:821.5px;top:85.7px;width:4.3px;height:4.5px;background:rgba(213,217,227,1.0)"></i><i style="left:825.5px;top:85.7px;width:4.3px;height:4.5px;background:rgba(208,212,222,1.0)"></i><i style="left:829.5px;top:85.7px;width:4.3px;height:4.5px;background:rgba(224,228,238,1.0)"></i><i style="left:833.5px;top:85.7px;width:4.3px;height:4.5px;background:rgba(204,208,218,1.0)"></i><i style="left:837.5px;top:85.7px;width:4.3px;height:4.5px;background:rgba(202,206,216,1.0)"></i><i style="left:841.5px;top:85.7px;width:4.3px;height:4.5px;background:rgba(221,225,235,1.0)"></i><i style="left:845.5px;top:85.7px;width:4.3px;height:4.5px;background:rgba(216,220,230,1.0)"></i><i style="left:849.5px;top:85.7px;width:4.3px;height:4.5px;background:rgba(228,232,242,1.0)"></i><i style="left:853.5px;top:85.7px;width:4.3px;height:4.5px;background:rgba(202,206,216,1.0)"></i><i style="left:857.5px;top:85.7px;width:4.3px;height:4.5px;background:rgba(218,222,232,1.0)"></i><i style="left:861.5px;top:85.7px;width:4.3px;height:4.5px;background:rgba(226,230,240,0.6)"></i><i style="left:865.5px;top:85.7px;width:4.3px;height:4.5px;background:rgba(223,227,237,0.4)"></i><i style="left:869.5px;top:85.7px;width:4.3px;height:4.5px;background:rgba(211,215,225,0.2)"></i><i style="left:685.5px;top:89.9px;width:4.3px;height:4.5px;background:rgba(196,200,210,1.0)"></i><i style="left:689.5px;top:89.9px;width:4.3px;height:4.5px;background:rgba(200,204,214,1.0)"></i><i style="left:693.5px;top:89.9px;width:4.3px;height:4.5px;background:rgba(217,221,231,1.0)"></i><i style="left:697.5px;top:89.9px;width:4.3px;height:4.5px;background:rgba(213,217,227,1.0)"></i><i style="left:701.5px;top:89.9px;width:4.3px;height:4.5px;background:rgba(199,203,213,1.0)"></i><i style="left:705.5px;top:89.9px;width:4.3px;height:4.5px;background:rgba(193,197,207,1.0)"></i><i style="left:709.5px;top:89.9px;width:4.3px;height:4.5px;background:rgba(216,220,230,1.0)"></i><i style="left:713.5px;top:89.9px;width:4.3px;height:4.5px;background:rgba(208,212,222,1.0)"></i><i style="left:717.5px;top:89.9px;width:4.3px;height:4.5px;background:rgba(199,203,213,1.0)"></i><i style="left:721.5px;top:89.9px;width:4.3px;height:4.5px;background:rgba(219,223,233,1.0)"></i><i style="left:725.5px;top:89.9px;width:4.3px;height:4.5px;background:rgba(200,204,214,1.0)"></i><i style="left:729.5px;top:89.9px;width:4.3px;height:4.5px;background:rgba(223,227,237,1.0)"></i><i style="left:733.5px;top:89.9px;width:4.3px;height:4.5px;background:rgba(219,223,233,1.0)"></i><i style="left:737.5px;top:89.9px;width:4.3px;height:4.5px;background:rgba(221,225,235,1.0)"></i><i style="left:741.5px;top:89.9px;width:4.3px;height:4.5px;background:rgba(210,214,224,1.0)"></i><i style="left:745.5px;top:89.9px;width:4.3px;height:4.5px;background:rgba(220,224,234,1.0)"></i><i style="left:749.5px;top:89.9px;width:4.3px;height:4.5px;background:rgba(207,211,221,1.0)"></i><i style="left:753.5px;top:89.9px;width:4.3px;height:4.5px;background:rgba(208,212,222,1.0)"></i><i style="left:757.5px;top:89.9px;width:4.3px;height:4.5px;background:rgba(220,224,234,1.0)"></i><i style="left:761.5px;top:89.9px;width:4.3px;height:4.5px;background:rgba(215,219,229,1.0)"></i><i style="left:765.5px;top:89.9px;width:4.3px;height:4.5px;background:rgba(199,203,213,1.0)"></i><i style="left:769.5px;top:89.9px;width:4.3px;height:4.5px;background:rgba(197,201,211,1.0)"></i><i style="left:773.5px;top:89.9px;width:4.3px;height:4.5px;background:rgba(214,218,228,1.0)"></i><i style="left:777.5px;top:89.9px;width:4.3px;height:4.5px;background:rgba(224,228,238,1.0)"></i><i style="left:781.5px;top:89.9px;width:4.3px;height:4.5px;background:rgba(201,205,215,1.0)"></i><i style="left:785.5px;top:89.9px;width:4.3px;height:4.5px;background:rgba(221,225,235,1.0)"></i><i style="left:789.5px;top:89.9px;width:4.3px;height:4.5px;background:rgba(211,215,225,1.0)"></i><i style="left:793.5px;top:89.9px;width:4.3px;height:4.5px;background:rgba(201,205,215,1.0)"></i><i style="left:797.5px;top:89.9px;width:4.3px;height:4.5px;background:rgba(195,199,209,1.0)"></i><i style="left:801.5px;top:89.9px;width:4.3px;height:4.5px;background:rgba(221,225,235,1.0)"></i><i style="left:805.5px;top:89.9px;width:4.3px;height:4.5px;background:rgba(207,211,221,1.0)"></i><i style="left:809.5px;top:89.9px;width:4.3px;height:4.5px;background:rgba(222,226,236,1.0)"></i><i style="left:813.5px;top:89.9px;width:4.3px;height:4.5px;background:rgba(225,229,239,1.0)"></i><i style="left:817.5px;top:89.9px;width:4.3px;height:4.5px;background:rgba(222,226,236,1.0)"></i><i style="left:821.5px;top:89.9px;width:4.3px;height:4.5px;background:rgba(213,217,227,1.0)"></i><i style="left:825.5px;top:89.9px;width:4.3px;height:4.5px;background:rgba(194,198,208,1.0)"></i><i style="left:829.5px;top:89.9px;width:4.3px;height:4.5px;background:rgba(212,216,226,1.0)"></i><i style="left:833.5px;top:89.9px;width:4.3px;height:4.5px;background:rgba(192,196,206,1.0)"></i><i style="left:837.5px;top:89.9px;width:4.3px;height:4.5px;background:rgba(209,213,223,1.0)"></i><i style="left:841.5px;top:89.9px;width:4.3px;height:4.5px;background:rgba(213,217,227,1.0)"></i><i style="left:845.5px;top:89.9px;width:4.3px;height:4.5px;background:rgba(225,229,239,1.0)"></i><i style="left:849.5px;top:89.9px;width:4.3px;height:4.5px;background:rgba(207,211,221,1.0)"></i><i style="left:853.5px;top:89.9px;width:4.3px;height:4.5px;background:rgba(221,225,235,1.0)"></i><i style="left:857.5px;top:89.9px;width:4.3px;height:4.5px;background:rgba(206,210,220,1.0)"></i><i style="left:861.5px;top:89.9px;width:4.3px;height:4.5px;background:rgba(208,212,222,0.6)"></i><i style="left:865.5px;top:89.9px;width:4.3px;height:4.5px;background:rgba(211,215,225,0.4)"></i><i style="left:869.5px;top:89.9px;width:4.3px;height:4.5px;background:rgba(201,205,215,0.2)"></i></div>
    <div class="abs" style="left:686.8px;top:106.8px;width:54.5px;height:18.7px;border-radius:9.4px;background:#e3f5ea"></div>
    <div class="t" style="left:697px;top:110.3px;font-size:12px;color:#1fa35a;-webkit-text-stroke:.3px #1fa35a">Admin</div>
    <div class="abs" style="left:629.6px;top:135.3px;width:259.6px;height:1px;background:#eef0f3"></div>
    <div class="abs" style="left:629.6px;top:176.5px;width:259.6px;height:1px;background:#eef0f3"></div>
    <svg class="abs ic" style="left:642px;top:150.6px;color:#1f2937;stroke-width:2.1" width="13.4" height="13.4" viewBox="0 0 24 24"><path d="M12.220 2h-.44a2 2 0 0 0-2 2v.18a2 2 0 0 1-1 1.730l-.43.25a2 2 0 0 1-2 0l-.15-.08a2 2 0 0 0-2.730.730l-.22.38a2 2 0 0 0 .73 2.730l.15.1a2 2 0 0 1 1 1.720v.51a2 2 0 0 1-1 1.740l-.15.09a2 2 0 0 0-.73 2.730l.22.38a2 2 0 0 0 2.730.730l.15-.08a2 2 0 0 1 2 0l.43.25a2 2 0 0 1 1 1.730V20a2 2 0 0 0 2 2h.44a2 2 0 0 0 2-2v-.18a2 2 0 0 1 1-1.730l.43-.25a2 2 0 0 1 2 0l.15.08a2 2 0 0 0 2.730-.730l.22-.39a2 2 0 0 0-.73-2.730l-.15-.08a2 2 0 0 1-1-1.740v-.5a2 2 0 0 1 1-1.740l.15-.09a2 2 0 0 0 .73-2.730l-.22-.38a2 2 0 0 0-2.730-.730l-.15.08a2 2 0 0 1-2 0l-.43-.25a2 2 0 0 1-1-1.730V4a2 2 0 0 0-2-2z"/><circle cx="12" cy="12" r="3"/></svg>
    <div class="t" style="left:663px;top:151.1px;font-size:12.7px;color:#1b2333;-webkit-text-stroke:.25px #1b2333">Settings</div>
    <svg class="abs ic" style="left:642px;top:191px;color:#1f2937;stroke-width:2.1" width="13.5" height="13.5" viewBox="0 0 24 24"><path d="M9 21H6a2 2 0 0 1-2-2V5a2 2 0 0 1 2-2h3"/><path d="M15 16.5l4.5-4.5-4.5-4.5"/><path d="M19.5 12H9"/></svg>
    <div class="t" style="left:664.7px;top:191.2px;font-size:12.7px;color:#1b2333;-webkit-text-stroke:.25px #1b2333">Log out</div>
    <div class="abs" style="left:631.4px;top:134.3px;width:148.5px;height:43.3px;border:3px solid #fb0808"></div>
  </div>
</div>
</body>
</html>
